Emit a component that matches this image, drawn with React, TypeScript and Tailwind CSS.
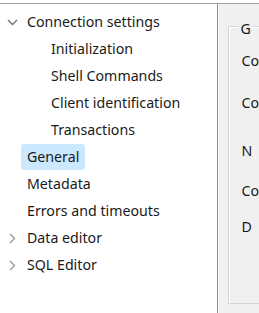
import React from 'react';

type Node = { label: string; level: 0 | 1; arrow?: 'open' | 'closed'; selected?: boolean };

const nodes: Node[] = [
  { label: 'Connection settings', level: 0, arrow: 'open' },
  { label: 'Initialization', level: 1 },
  { label: 'Shell Commands', level: 1 },
  { label: 'Client identification', level: 1 },
  { label: 'Transactions', level: 1 },
  { label: 'General', level: 0, selected: true },
  { label: 'Metadata', level: 0 },
  { label: 'Errors and timeouts', level: 0 },
  { label: 'Data editor', level: 0, arrow: 'closed' },
  { label: 'SQL Editor', level: 0, arrow: 'closed' },
];

const Chevron = ({ open }: { open: boolean }) =>
  open ? (
    <svg width="11" height="7" viewBox="0 0 11 7" className="absolute left-[7px] top-[11px]">
      <path d="M1 1l4.5 4.5L10 1" fill="none" stroke="#707070" strokeWidth="1.4" />
    </svg>
  ) : (
    <svg width="7" height="11" viewBox="0 0 7 11" className="absolute left-[9px] top-[9px]">
      <path d="M1 1l4.5 4.5L1 10" fill="none" stroke="#9a9a9a" strokeWidth="1.4" />
    </svg>
  );

// field label stubs visible at the clipped right edge, with their row heights
const fields = [
  { t: 'Co', h: 'h-[42px]' },
  { t: 'Co', h: 'h-[48px]' },
  { t: 'N', h: 'h-[40px]' },
  { t: 'Co', h: 'h-[36px]' },
  { t: 'D', h: 'h-[36px]' },
];

export default function App() {
  return (
    <div
      className="w-[259px] h-[313px] bg-white overflow-hidden flex flex-col text-[14.2px] text-[#1a1a1a]"
      style={{ fontFamily: '"Noto Sans", sans-serif' }}
    >
      <div className="h-[3px] bg-white" />
      <div className="h-[1px] bg-[#a0a0a0]" />
      <div className="flex flex-1 min-h-0">
        {/* tree */}
        <div className="w-[222px] pt-[4px]">
          {nodes.map((n) => (
            <div key={n.label} className="relative h-[27px] flex items-center">
              {n.arrow && <Chevron open={n.arrow === 'open'} />}
              <span
                className={
                  (n.level === 1 ? 'ml-[45px]' : 'ml-[21px]') +
                  ' leading-[26px] px-[6px] rounded-[3px] ' +
                  (n.selected ? 'bg-[#cce8ff]' : '')
                }
              >
                {n.label}
              </span>
            </div>
          ))}
        </div>
        {/* splitter */}
        <div className="w-[1px] bg-[#c8c8c8]" />
        <div className="w-[1px] bg-[#8c8c8c]" />
        <div className="w-[1px] bg-white" />
        {/* right pane */}
        <div className="flex-1 bg-[#f0f0f0] pl-[9px] pt-[22px] pb-[9px]">
          <div className="h-full border border-[#d5d5d5] border-r-0 shadow-[inset_1px_1px_0_#ffffff] relative pl-[12px]">
            <span className="absolute left-[9px] -top-[8px] bg-[#f0f0f0] px-[2px] leading-[20px]">G</span>
            <div className="pt-[24px] flex flex-col leading-[20px]">
              {fields.map((f, i) => (
                <div key={i} className={f.h}>
                  {f.t}
                </div>
              ))}
            </div>
          </div>
        </div>
      </div>
    </div>
  );
}
